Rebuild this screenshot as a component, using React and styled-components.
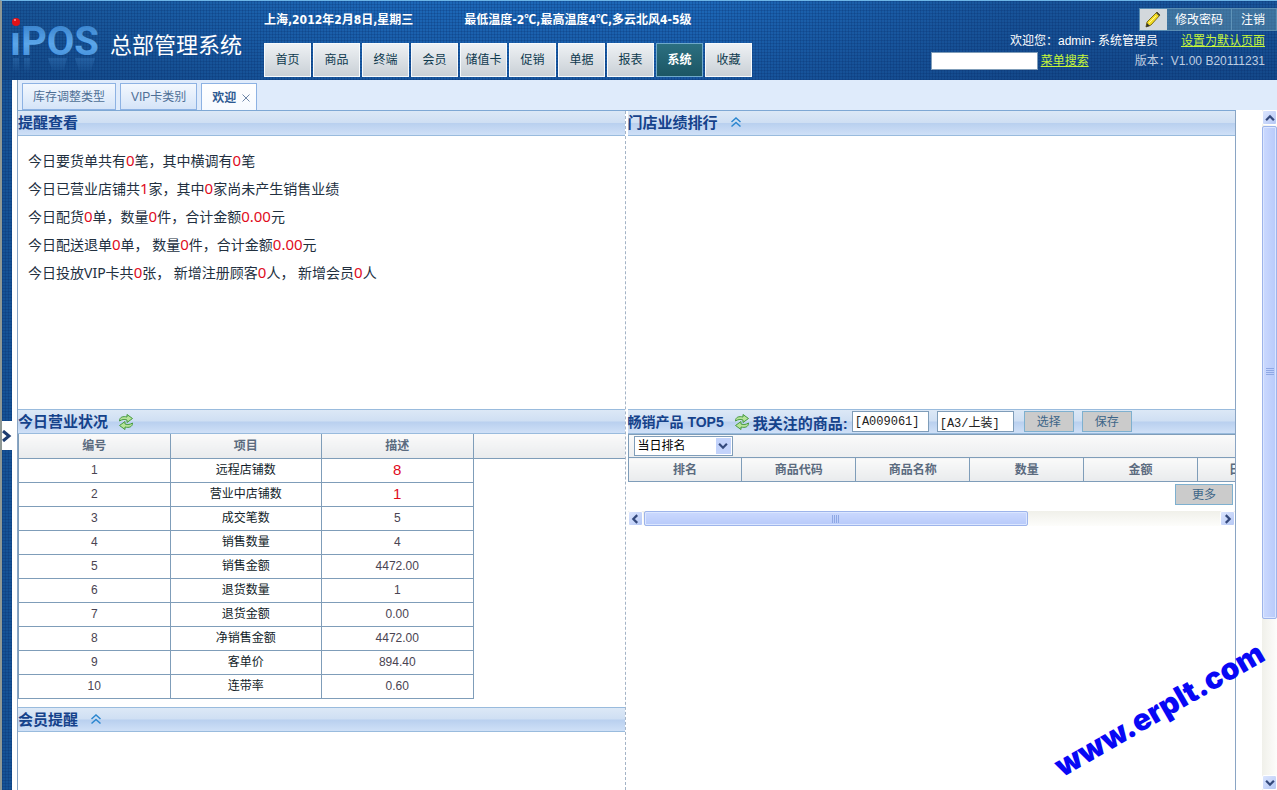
import React from "react";
import styled, { createGlobalStyle, css } from "styled-components";

const sans = '"Liberation Sans", "Noto Sans CJK SC", sans-serif';
const LINE = "#7f9db9";

const Global = createGlobalStyle`
  * { box-sizing: border-box; }
  body {
    margin: 0;
    background: #fff;
    color: #1a2b3c;
    font: 12px/16px ${sans};
  }
  button, input, select { font-family: inherit; margin: 0; }
`;

const weave = css`
  background:
    repeating-linear-gradient(90deg, rgba(4, 40, 100, 0.22) 0 1px, transparent 1px 3px),
    repeating-linear-gradient(0deg, rgba(4, 40, 100, 0.22) 0 1px, transparent 1px 3px),
    ${(p) => p.$fill};
`;

const Page = styled.div`
  display: flex;
  flex-direction: column;
  min-height: 100vh;
  position: relative;
  overflow: hidden;
`;

/* ---------- header ---------- */
const Header = styled.header`
  ${weave}
  display: flex;
  height: 80px;
  border-top: 1px solid #6db5e6;
  border-left: 2px solid #8f9894;
  color: #fff;
`;

const Brand = styled.div`
  display: flex;
  align-items: flex-start;
  width: 262px;
  padding-left: 8px;
`;

const Title = styled.h1`
  margin: 29px 0 0 6px;
  font-size: 22px;
  line-height: 32px;
  font-weight: 400;
  white-space: nowrap;
`;

const HeaderMain = styled.div`
  flex: 1;
  min-width: 0;
`;

const Weather = styled.div`
  display: flex;
  gap: 51px;
  padding-top: 11px;
  font-family: "DejaVu Sans Condensed", "Noto Sans CJK SC", sans-serif;
  font-weight: 700;
  white-space: nowrap;
`;

const Degree = styled.span`
  font-family: "Noto Sans CJK SC", sans-serif;
  line-height: 1;
`;

const MainNav = styled.nav`
  display: flex;
  gap: 2px;
  margin-top: 15px;
`;

const NavButton = styled.button`
  width: 47px;
  height: 34px;
  padding: 0 0 4px;
  border: 1px solid ${(p) => (p.$active ? "#6fa9c9" : "#f7fafc")};
  background: ${(p) =>
    p.$active ? "linear-gradient(#2c6f80, #1c5664)" : "linear-gradient(#eef1f4, #c9d0d6)"};
  color: ${(p) => (p.$active ? "#fff" : "#0e3a4e")};
  font-size: 12px;
  font-weight: ${(p) => (p.$active ? 700 : 400)};
  white-space: nowrap;
`;

const UserArea = styled.div`
  display: flex;
  flex-direction: column;
  align-items: flex-end;
  width: 350px;
`;

const Account = styled.div`
  display: flex;
  height: 23px;
  margin-top: 7px;
  background: rgba(110, 160, 175, 0.45);
  border: 1px solid rgba(120, 170, 200, 0.5);
`;

const PencilBox = styled.span`
  display: flex;
  align-items: center;
  justify-content: center;
  width: 27px;
  background: #d3d8dc;
`;

const AccountButton = styled.button`
  padding: 0 ${(p) => (p.$last ? 11 : 8)}px 2px ${(p) => (p.$last ? 9 : 8)}px;
  border: 0;
  border-right: ${(p) => (p.$last ? "0" : "1px solid #5f93b8")};
  background: none;
  color: #fff;
  font-size: 12px;
`;

const UserLine = styled.div`
  display: flex;
  gap: ${(p) => p.$gap}px;
  align-items: center;
  height: 20px;
  padding-right: 12px;
  white-space: nowrap;
`;

const HeaderLink = styled.a`
  color: #c6f53a;
  text-decoration: underline;
`;

const SearchGroup = styled.form`
  display: flex;
  align-items: center;
  gap: 3px;
`;

const SearchInput = styled.input`
  width: 107px;
  height: 18px;
  border: 1px solid ${LINE};
  background: #fff;
`;

const Version = styled.span`
  color: #bfcde0;
`;

/* ---------- workspace ---------- */
const Body = styled.div`
  display: flex;
  flex: 1;
`;

const Rail = styled.aside`
  ${weave}
  width: 12px;
  border-left: 2px solid #8f9894;
  padding-top: 341px;
`;

const RailToggle = styled.button`
  display: flex;
  align-items: center;
  justify-content: center;
  width: 10px;
  height: 29px;
  padding: 0;
  border: 0;
  background: #fff;
`;

const Workspace = styled.main`
  display: flex;
  flex-direction: column;
  flex: 1;
  min-width: 0;
  padding-left: 5px;
`;

const TabBar = styled.div`
  display: flex;
  align-items: flex-end;
  gap: 4px;
  height: 30px;
  padding-left: 4px;
  border-left: 1px solid ${LINE};
  background: #dfebfb;
`;

const Tab = styled.button`
  height: 27px;
  padding: 0 10px 2px;
  border: 1px solid #8db2e3;
  border-bottom: ${(p) => (p.$active ? "0" : "1px solid #8db2e3")};
  background: ${(p) => (p.$active ? "linear-gradient(#fff, #f6faff)" : "linear-gradient(#f3f8fe, #d5e4f8)")};
  color: ${(p) => (p.$active ? "#2d5a92" : "#4f6f96")};
  font-size: 12px;
  font-weight: ${(p) => (p.$active ? 700 : 400)};
  white-space: nowrap;
`;

const TabClose = styled.span`
  display: inline-block;
  margin-left: 6px;
  margin-right: -4px;
`;

const Scroller = styled.div`
  display: flex;
  flex: 1;
`;

const Portal = styled.div`
  display: grid;
  grid-template-columns: calc(50% - 1px) minmax(0, 1fr);
  flex: 1;
  margin-right: 26px;
  border: 1px solid #8aa5c4;
  border-top-color: #7fa8d4;
  border-bottom: 0;
`;

const Column = styled.div`
  min-width: 0;
  border-right: ${(p) => (p.$divided ? "1px dashed #a3b3c6" : "0")};
  padding-left: ${(p) => (p.$divided ? 0 : 2)}px;
`;

const Panel = styled.section`
  min-height: ${(p) => p.$min || 0}px;
`;

const PanelHead = styled.header`
  display: flex;
  align-items: center;
  height: 25px;
  border-bottom: 1px solid #99bbdd;
  border-top: ${(p) => (p.$first ? "0" : "1px solid #99bbdd")};
  background: linear-gradient(#dce8f6 0, #cfdff3 48%, #b9d0ef 52%, #cfe0f7 100%);
  white-space: nowrap;
`;

const PanelTitle = styled.h2`
  margin: 0;
  font-size: ${(p) => (p.$small ? 14 : 15)}px;
  line-height: 20px;
  font-weight: 700;
  color: #15428b;
`;

const IconButton = styled.button`
  display: flex;
  margin-left: ${(p) => p.$gap}px;
  padding: 0;
  border: 0;
  background: none;
`;

const Reminders = styled.ul`
  margin: 0;
  padding: 11px 10px;
  list-style: none;
  font-family: "Noto Sans", "Noto Sans CJK SC", sans-serif;
  font-size: 14px;
  line-height: 28px;
  color: #22303f;
`;

const Red = styled.span`
  color: #e00b1c;
  font-size: 15px;
  line-height: 1;
`;

const Grid = styled.table`
  width: 100%;
  table-layout: fixed;
  border-collapse: collapse;
  border: 0;
`;

const HeadCell = styled.th`
  height: 24px;
  padding: 0;
  border: 1px solid ${LINE};
  border-top-width: ${(p) => (p.$top ? 1 : 0)}px;
  background: linear-gradient(#fafafa, #e9ebed);
  color: #5b6b7f;
  font-weight: 700;
  text-align: center;
  white-space: nowrap;
  &:last-child { border-right: 0; }
  ${(p) => p.$start && "text-align: left; padding-left: 31px;"}
`;

const Cell = styled.td`
  height: 24px;
  padding: 0;
  border: 1px solid ${LINE};
  text-align: center;
  color: ${(p) => (p.$alert ? "#e00b1c" : p.$dark ? "#101c28" : "#4a4452")};
  font-size: ${(p) => (p.$alert ? 15 : 12)}px;
`;

const FollowLabel = styled(PanelTitle)`
  margin: 4px 4px 0 3px;
`;

const CodeInput = styled.input`
  width: 77px;
  height: 21px;
  margin-right: 8px;
  padding: 0 2px;
  border: 1px solid ${LINE};
  background: #fff;
  color: #222;
  font: 12px "Liberation Mono", "Noto Sans CJK SC", monospace;
`;

const GrayButton = styled.button`
  width: ${(p) => p.$w || 50}px;
  height: 21px;
  margin-left: ${(p) => p.$ml || 0}px;
  padding: 0 0 2px;
  border: 1px solid #7eb0cf;
  background: #cbcbcb;
  color: #3d6688;
  font-size: 12px;
`;

const Ranking = styled.div`
  height: 23px;
  padding: 1px 5px 0;
  border-top: 1px solid ${LINE};
  border-left: 1px solid ${LINE};
  background: linear-gradient(#fafafa, #eceef0);
`;

const SelectBox = styled.div`
  position: relative;
  width: 99px;
  height: 20px;
`;

const RankSelect = styled.select`
  width: 99px;
  height: 20px;
  padding: 0 3px;
  border: 1px solid ${LINE};
  border-radius: 0;
  background: #fff;
  color: #000;
  font-size: 12px;
  appearance: none;
`;

const SelectArrow = styled.span`
  position: absolute;
  top: 2px;
  right: 2px;
  display: flex;
  align-items: center;
  justify-content: center;
  width: 15px;
  height: 16px;
  background: #c3d3fb;
  pointer-events: none;
`;

const ClipX = styled.div`
  overflow: hidden;
  & > table { width: 684px; }
`;

const MoreRow = styled.div`
  display: flex;
  justify-content: flex-end;
  padding: 2px 2px 6px 0;
`;

/* ---------- scroll bars ---------- */
const Track = styled.div`
  display: flex;
  flex-direction: ${(p) => (p.$vertical ? "column" : "row")};
  ${(p) => (p.$vertical ? "width: 15px;" : "height: 15px;")}
  background: linear-gradient(${(p) => (p.$vertical ? "90deg" : "180deg")}, #f0f0ea, #fdfdfb);
`;

const TrackButton = styled.button`
  display: flex;
  align-items: center;
  justify-content: center;
  width: 15px;
  height: 15px;
  padding: 0;
  border: 1px solid #fff;
  border-radius: 2px;
  background: linear-gradient(135deg, #dbe5fe, #b6c8f5);
`;

const Thumb = styled.div`
  display: flex;
  align-items: center;
  justify-content: center;
  flex: ${(p) => p.$share} 1 0;
  margin: ${(p) => (p.$vertical ? "1px 0" : "0 1px")};
  border: 1px solid #9db4ea;
  border-radius: 2px;
  background: linear-gradient(${(p) => (p.$vertical ? "90deg" : "180deg")}, #cbd9fe, #b8cafa);
  box-shadow: inset 0 0 0 1px #dbe6ff;
`;

const Rest = styled.div`
  flex: ${(p) => p.$share} 1 0;
`;

const Watermark = styled.div`
  position: absolute;
  right: 0;
  bottom: 65px;
  color: #0808f5;
  font: 900 30px/32px Inter, "Liberation Sans", sans-serif;
  white-space: nowrap;
  transform: rotate(-30deg);
  pointer-events: none;
`;

/* ---------- drawings ---------- */
const Logo = () => (
  <svg width="94" height="78" viewBox="0 0 94 78" role="img" aria-label="iPOS">
    <defs>
      <linearGradient id="ink" x1="0" y1="0" x2="0" y2="1">
        <stop offset="0" stopColor="#2f78c4" />
        <stop offset="0.55" stopColor="#5ba6ea" />
        <stop offset="1" stopColor="#3a86d4" />
      </linearGradient>
      <linearGradient id="fade" x1="0" y1="0" x2="0" y2="1">
        <stop offset="0" stopColor="#5ba6ea" stopOpacity="0.22" />
        <stop offset="1" stopColor="#5ba6ea" stopOpacity="0" />
      </linearGradient>
    </defs>
    <text x="0" y="54" fontSize="40" fontWeight="700" fontFamily="Roboto, sans-serif" fill="url(#ink)">ıPOS</text>
    <path d="M3 57H9V70H3ZM14 57H20V72H14ZM38 57H57L54 69H42ZM65 57H85L81 70H69Z" fill="url(#fade)" />
    <circle cx="6" cy="21" r="4" fill="#e01218" />
    <circle cx="5" cy="19" r="1" fill="#ff9b93" />
  </svg>
);

const Pencil = () => (
  <svg width="18" height="18" viewBox="0 0 18 18" aria-hidden="true">
    <path d="M2 16 3 11 13 1 16 4 7 14Z" fill="#f3dc22" stroke="#7d6c14" />
    <path d="M13 1 16 4 15 5 12 2Z" fill="#444" />
    <path d="M2 16 3 12 6 15Z" fill="#333" />
    <path d="M5 12 12 5" stroke="#fff59a" />
  </svg>
);

const Refresh = () => (
  <svg width="16" height="16" viewBox="0 0 16 16" aria-hidden="true">
    <path d="M1.500 7C1.500 3 5 2 9 3V0.5L14.500 4.500 9 8.500V6C6 5 4 5.500 1.500 7Z" fill="#b6e39a" stroke="#459a3e" />
    <path d="M14.500 9C14.500 13 11 14 7 13V15.500L1.500 11.500 7 7.500V10C10 11 12 10.500 14.500 9Z" fill="#b6e39a" stroke="#459a3e" />
  </svg>
);

const Collapse = () => (
  <svg width="12" height="12" viewBox="0 0 12 12" fill="none" stroke="#2a86cf" strokeWidth="1.500" aria-hidden="true">
    <path d="M1.500 5 6 1 10.500 5M1.500 9.500 6 5.500 10.500 9.500" />
  </svg>
);

const turns = { up: 0, right: 90, down: 180, left: 270 };
const Chevron = ({ dir, size = 10 }) => (
  <svg width={size} height={size} viewBox="0 0 9 9" fill="none" stroke="#34497c" strokeWidth="2" aria-hidden="true">
    <path d="M1 6.500 4.500 3 8 6.500" transform={`rotate(${turns[dir]} 4.500 4.500)`} />
  </svg>
);

const RailArrow = () => (
  <svg width="10" height="12" viewBox="0 0 10 12" fill="none" stroke="#1d3c70" strokeWidth="3" aria-hidden="true">
    <path d="M1 1 7 6 1 11" />
  </svg>
);

const Cross = () => (
  <svg width="8" height="8" viewBox="0 0 8 8" stroke="#6f87a8" aria-hidden="true">
    <path d="M0.500 0.500 7.500 7.500M7.500 0.500 0.500 7.500" />
  </svg>
);

const Grip = ({ vertical }) => (
  <svg width="8" height="8" viewBox="0 0 8 8" stroke="#8fa8e4" aria-hidden="true">
    <path d={vertical ? "M0 .5H8M0 2.500H8M0 4.500H8M0 6.500H8" : "M.5 0V8M2.500 0V8M4.500 0V8M6.500 0V8"} />
  </svg>
);

const headerFill =
  "linear-gradient(transparent, rgba(10, 45, 100, 0.3)), linear-gradient(90deg, #185596 0, #1d68b8 30%, #1d68b8 55%, #18549a 80%)";

const nav = ["首页", "商品", "终端", "会员", "储值卡", "促销", "单据", "报表", "系统", "收藏"];

const reminders = [
  ["今日要货单共有", "0", "笔，其中横调有", "0", "笔"],
  ["今日已营业店铺共", "1", "家，其中", "0", "家尚未产生销售业绩"],
  ["今日配货", "0", "单，数量", "0", "件，合计金额", "0.00", "元"],
  ["今日配送退单", "0", "单， 数量", "0", "件，合计金额", "0.00", "元"],
  ["今日投放VIP卡共", "0", "张， 新增注册顾客", "0", "人， 新增会员", "0", "人"],
];

const business = [
  ["远程店铺数", "8"],
  ["营业中店铺数", "1"],
  ["成交笔数", "5"],
  ["销售数量", "4"],
  ["销售金额", "4472.00"],
  ["退货数量", "1"],
  ["退货金额", "0.00"],
  ["净销售金额", "4472.00"],
  ["客单价", "894.40"],
  ["连带率", "0.60"],
];

const rankColumns = ["排名", "商品代码", "商品名称", "数量", "金额", "日"];

export default function App() {
  return (
    <Page>
      <Global />
      <Header $fill={headerFill}>
        <Brand>
          <Logo />
          <Title>总部管理系统</Title>
        </Brand>
        <HeaderMain>
          <Weather>
            <span>上海,2012年2月8日,星期三</span>
            <span>
              最低温度-2<Degree>℃</Degree>,最高温度4<Degree>℃</Degree>,多云北风4-5级
            </span>
          </Weather>
          <MainNav>
            {nav.map((item) => (
              <NavButton key={item} $active={item === "系统"}>{item}</NavButton>
            ))}
          </MainNav>
        </HeaderMain>
        <UserArea>
          <Account>
            <PencilBox><Pencil /></PencilBox>
            <AccountButton>修改密码</AccountButton>
            <AccountButton $last>注销</AccountButton>
          </Account>
          <UserLine $gap={23}>
            <span>欢迎您：admin- 系统管理员</span>
            <HeaderLink href="#default">设置为默认页面</HeaderLink>
          </UserLine>
          <UserLine $gap={46}>
            <SearchGroup>
              <SearchInput aria-label="菜单搜索" />
              <HeaderLink href="#search">菜单搜索</HeaderLink>
            </SearchGroup>
            <Version>版本：V1.00 B20111231</Version>
          </UserLine>
        </UserArea>
      </Header>

      <Body>
        <Rail $fill="#155296">
          <RailToggle aria-label="展开"><RailArrow /></RailToggle>
        </Rail>
        <Workspace>
          <TabBar>
            <Tab>库存调整类型</Tab>
            <Tab>VIP卡类别</Tab>
            <Tab $active>欢迎<TabClose><Cross /></TabClose></Tab>
          </TabBar>
          <Scroller>
            <Portal>
              <Column $divided>
                <Panel $min={298}>
                  <PanelHead $first>
                    <PanelTitle>提醒查看</PanelTitle>
                  </PanelHead>
                  <Reminders>
                    {reminders.map((parts) => (
                      <li key={parts[0]}>
                        {parts.map((part, i) => (i % 2 ? <Red key={i}>{part}</Red> : part))}
                      </li>
                    ))}
                  </Reminders>
                </Panel>
                <Panel $min={298}>
                  <PanelHead>
                    <PanelTitle>今日营业状况</PanelTitle>
                    <IconButton $gap={10} aria-label="刷新"><Refresh /></IconButton>
                  </PanelHead>
                  <Grid>
                    <thead>
                      <tr>
                        <HeadCell>编号</HeadCell>
                        <HeadCell>项目</HeadCell>
                        <HeadCell>描述</HeadCell>
                        <HeadCell />
                      </tr>
                    </thead>
                    <tbody>
                      {business.map(([name, value], i) => (
                        <tr key={name}>
                          <Cell>{i + 1}</Cell>
                          <Cell $dark>{name}</Cell>
                          <Cell $alert={i < 2}>{value}</Cell>
                        </tr>
                      ))}
                    </tbody>
                  </Grid>
                </Panel>
                <Panel>
                  <PanelHead>
                    <PanelTitle>会员提醒</PanelTitle>
                    <IconButton $gap={12} aria-label="收起"><Collapse /></IconButton>
                  </PanelHead>
                </Panel>
              </Column>
              <Column>
                <Panel $min={298}>
                  <PanelHead $first>
                    <PanelTitle>门店业绩排行</PanelTitle>
                    <IconButton $gap={12} aria-label="收起"><Collapse /></IconButton>
                  </PanelHead>
                </Panel>
                <Panel>
                  <PanelHead>
                    <PanelTitle $small>畅销产品 TOP5</PanelTitle>
                    <IconButton $gap={10} aria-label="刷新"><Refresh /></IconButton>
                    <FollowLabel>我关注的商品:</FollowLabel>
                    <CodeInput aria-label="商品代码" defaultValue="[A009061]" />
                    <CodeInput aria-label="商品类别" defaultValue="[A3/上装]" />
                    <GrayButton $ml={2}>选择</GrayButton>
                    <GrayButton $ml={8}>保存</GrayButton>
                  </PanelHead>
                  <Ranking>
                    <SelectBox>
                      <RankSelect aria-label="排名范围" defaultValue="day">
                        <option value="day">当日排名</option>
                      </RankSelect>
                      <SelectArrow><Chevron dir="down" /></SelectArrow>
                    </SelectBox>
                  </Ranking>
                  <ClipX>
                    <Grid>
                      <thead>
                        <tr>
                          {rankColumns.map((name) => (
                            <HeadCell key={name} $top $start={name === "日"}>{name}</HeadCell>
                          ))}
                        </tr>
                      </thead>
                    </Grid>
                  </ClipX>
                  <MoreRow><GrayButton $w={58}>更多</GrayButton></MoreRow>
                  <Track>
                    <TrackButton aria-label="向左"><Chevron dir="left" /></TrackButton>
                    <Thumb $share={2}><Grip /></Thumb>
                    <Rest $share={1} />
                    <TrackButton aria-label="向右"><Chevron dir="right" /></TrackButton>
                  </Track>
                </Panel>
              </Column>
            </Portal>
            <Track $vertical>
              <TrackButton aria-label="向上"><Chevron dir="up" /></TrackButton>
              <Thumb $vertical $share={76}><Grip vertical /></Thumb>
              <Rest $share={24} />
              <TrackButton aria-label="向下"><Chevron dir="down" /></TrackButton>
            </Track>
          </Scroller>
        </Workspace>
      </Body>
      <Watermark>www.erplt.com</Watermark>
    </Page>
  );
}
